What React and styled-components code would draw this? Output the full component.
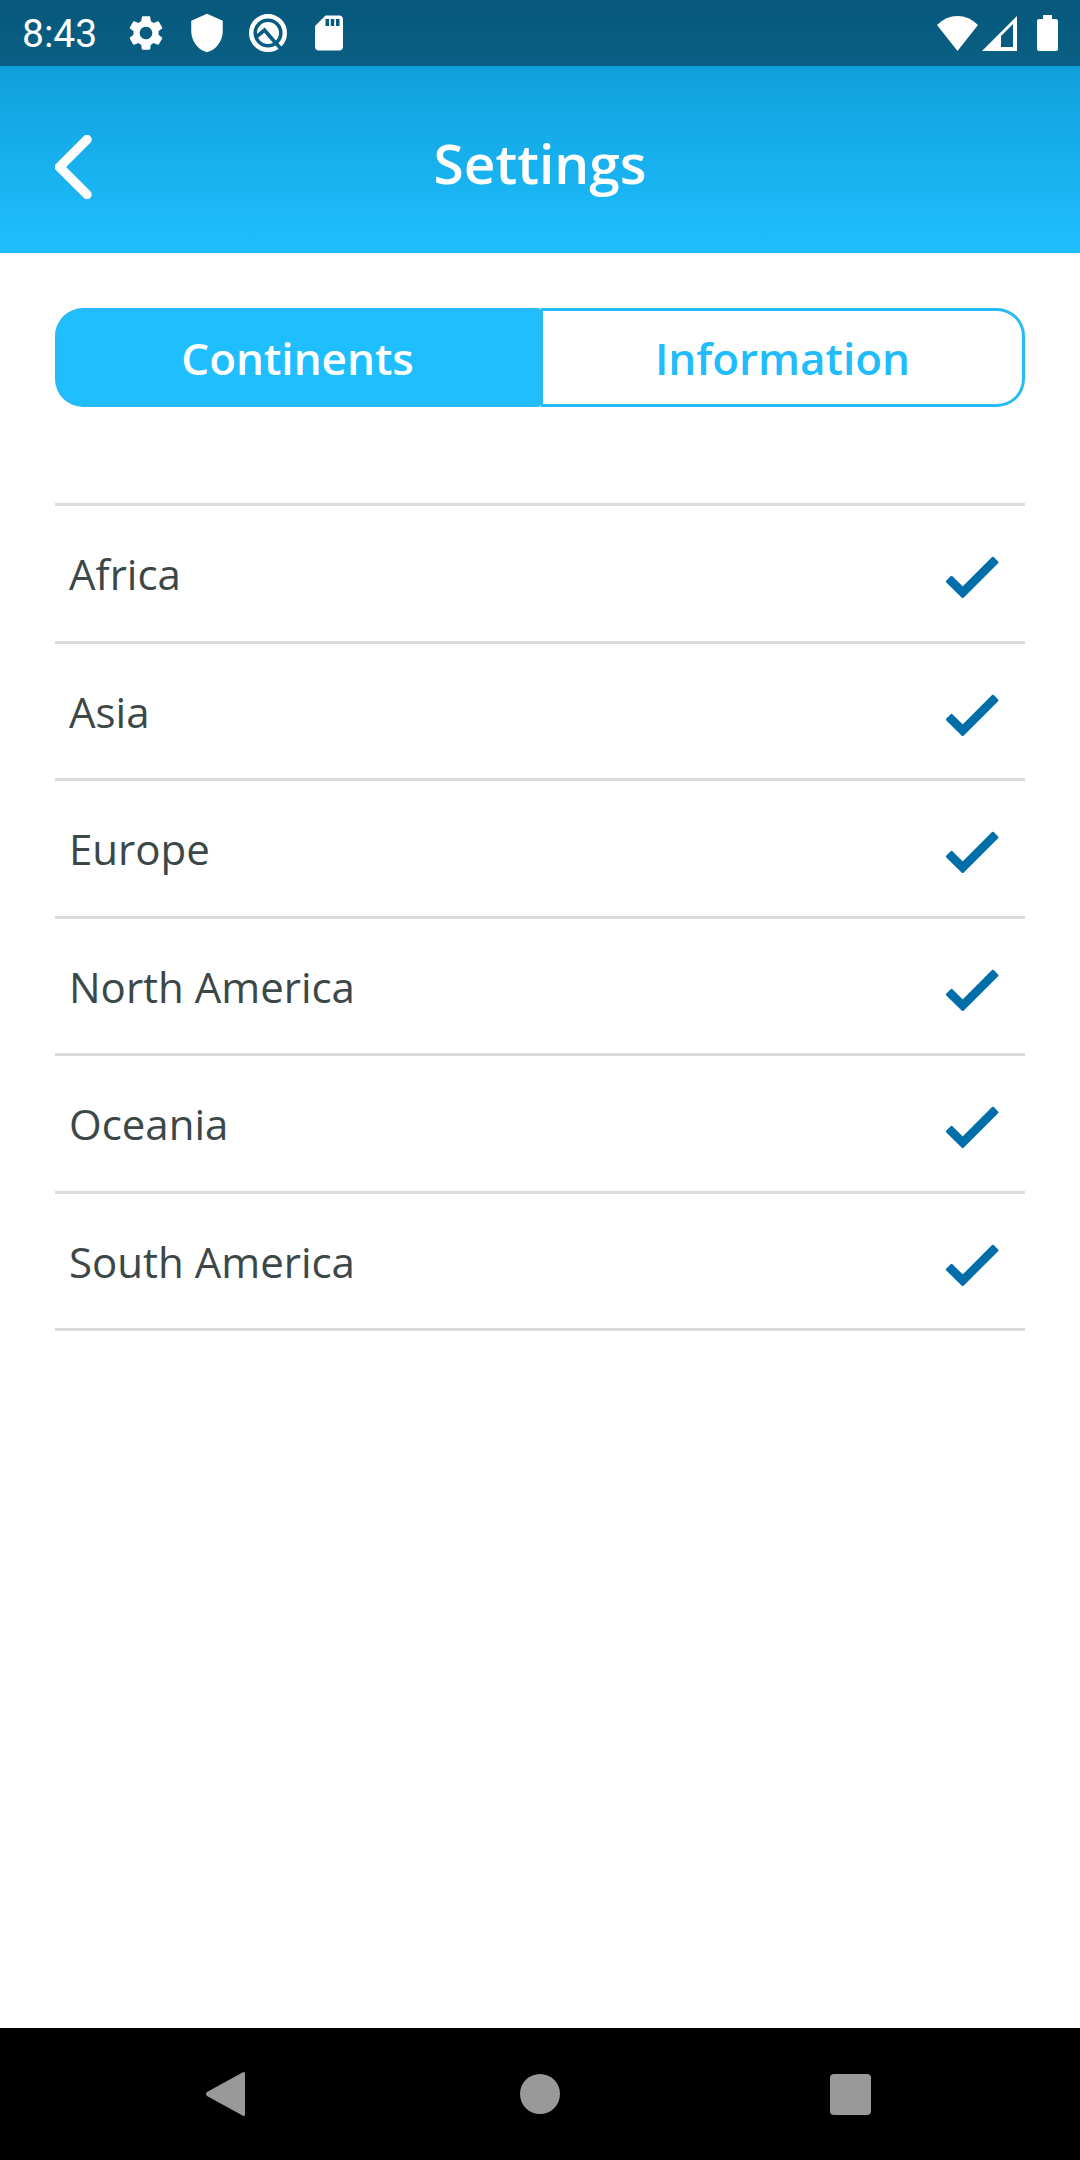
import React, { useState } from 'react';
import styled, { createGlobalStyle, css } from 'styled-components';
import { MdSettings, MdShield, MdSdCard } from 'react-icons/md';

const GlobalStyle = createGlobalStyle`
  *, *::before, *::after {
    box-sizing: border-box;
  }

  body {
    margin: 0;
    background: #fff;
    font-family: 'Open Sans', sans-serif;
  }

  button {
    font-family: inherit;
    cursor: pointer;
  }
`;

const S = {
  Screen: styled.div`
    display: flex;
    flex-direction: column;
    min-height: 100vh;
    background: #fff;
  `,
  Top: styled.div`
    background: linear-gradient(#0b94cf, #1fbfff);
  `,
  StatusBar: styled.div`
    display: flex;
    align-items: center;
    justify-content: space-between;
    height: 66px;
    padding: 0 22px;
    background: rgba(0, 0, 0, 0.4);
    color: #fff;
  `,
  StatusGroup: styled.div`
    display: flex;
    align-items: center;
    gap: ${(props) => props.$gap}px;

    svg {
      display: block;
    }
  `,
  Time: styled.span`
    margin-right: 9px;
    padding-top: 2px;
    font-family: Roboto, sans-serif;
    font-size: 39px;
    line-height: 46px;
  `,
  Header: styled.header`
    display: grid;
    grid-template-columns: 1fr auto 1fr;
    align-items: center;
    height: 187px;
    padding: 6px 55px 0;
    color: #fff;
  `,
  Back: styled.button`
    justify-self: start;
    padding: 8px 0 0;
    border: 0;
    background: none;
    color: inherit;

    svg {
      display: block;
    }
  `,
  Title: styled.h1`
    margin: 0;
    font-size: 55px;
    font-weight: 600;
    line-height: 75px;
  `,
  Main: styled.main`
    flex: 1;
    padding: 55px;
  `,
  Tabs: styled.div`
    display: grid;
    grid-template-columns: 1fr 1fr;
    margin-bottom: 96px;
  `,
  Tab: styled.button`
    height: 99px;
    padding: 0;
    border: 3px solid #27baf5;
    border-radius: 2px;
    background: #fff;
    color: #20bcfb;
    font-size: 44px;
    font-weight: 600;
    line-height: 60px;

    &:first-child {
      border-top-left-radius: 28px;
      border-bottom-left-radius: 28px;
    }

    &:last-child {
      border-top-right-radius: 28px;
      border-bottom-right-radius: 28px;
    }

    ${(props) => props.$active && css`
      background: #1fbfff;
      color: #fff;
    `}
  `,
  List: styled.ul`
    display: grid;
    grid-auto-rows: 1fr;
    min-height: 828px;
    margin: 0;
    padding: 0;
    border-top: 3px solid #dbdbdb;
    list-style: none;
  `,
  Row: styled.li`
    border-bottom: 3px solid #dbdbdb;
  `,
  Label: styled.label`
    display: flex;
    align-items: center;
    justify-content: space-between;
    height: 100%;
    padding: 2px 24px 0 14px;
    color: #3c4748;
    font-size: 42px;
    line-height: 56px;
    cursor: pointer;
  `,
  Check: styled.span`
    display: grid;

    input, svg {
      grid-area: 1 / 1;
    }

    input {
      width: 100%;
      height: 100%;
      margin: 0;
      appearance: none;
    }

    svg {
      visibility: hidden;
      pointer-events: none;
    }

    input:checked + svg {
      visibility: visible;
    }
  `,
  NavBar: styled.nav`
    display: flex;
    align-items: center;
    justify-content: center;
    height: 132px;
    background: #000;
  `,
  NavButton: styled.button`
    display: flex;
    align-items: center;
    justify-content: center;
    width: 310px;
    height: 132px;
    padding: 0;
    border: 0;
    background: none;
    color: #999;
  `,
};

const CONTINENTS = ['Africa', 'Asia', 'Europe', 'North America', 'Oceania', 'South America'];
const TABS = ['Continents', 'Information'];

function QuickIcon() {
  return (
    <svg width="42" height="38" viewBox="0 0 42 38" fill="none">
      <circle cx="21" cy="19" r="16.8" stroke="currentColor" strokeWidth="4.4" />
      <circle cx="21" cy="19" r="11" fill="currentColor" />
      <path d="M8 24L17.500 16L26 26L36 37" stroke="#085b83" strokeWidth="3.6" />
    </svg>
  );
}

function StatusBar() {
  return (
    <S.StatusBar>
      <S.StatusGroup $gap={19}>
        <S.Time>8:43</S.Time>
        <MdSettings size={42} />
        <MdShield size={42} />
        <QuickIcon />
        <MdSdCard size={42} />
      </S.StatusGroup>
      <S.StatusGroup $gap={4}>
        <svg width="41" height="35" viewBox="0 0 41 35" fill="currentColor">
          <path d="M0 9Q9 0 20.500 0T41 9L20.500 35Z" />
        </svg>
        <svg width="51" height="35" viewBox="0 0 51 35" fill="currentColor">
          <path fillRule="evenodd" d="M0 35L35 0V35ZM19 20V31H31V8Z" />
        </svg>
        <svg width="21" height="36" viewBox="0 0 21 36" fill="currentColor">
          <path d="M6 0H15V4H19Q21 4 21 6V34Q21 36 19 36H2Q0 36 0 34V6Q0 4 2 4H6Z" />
        </svg>
      </S.StatusGroup>
    </S.StatusBar>
  );
}

function ContinentRow({ name, checked, onChange }) {
  return (
    <S.Row>
      <S.Label>
        {name}
        <S.Check>
          <input type="checkbox" checked={checked} onChange={onChange} />
          <svg width="56" height="50" viewBox="0 0 56 50" fill="#006ea8" stroke="#006ea8">
            <path d="M2.200 32.500L6.600 28.100L17.700 39.200L47.900 9L52.200 13.300L17.700 47.800Z" strokeWidth="2.5" strokeLinejoin="round" />
          </svg>
        </S.Check>
      </S.Label>
    </S.Row>
  );
}

function App() {
  const [tab, setTab] = useState('Continents');
  const [selected, setSelected] = useState(CONTINENTS);

  const toggle = (name) => {
    setSelected(selected.includes(name)
      ? selected.filter((item) => item !== name)
      : [...selected, name]);
  };

  return (
    <S.Screen>
      <GlobalStyle />
      <S.Top>
        <StatusBar />
        <S.Header>
          <S.Back aria-label="Back">
            <svg width="38" height="64" viewBox="0 0 38 64" fill="none">
              <path d="M32 4.500L4.500 32L32 59.500" stroke="currentColor" strokeWidth="9.5" strokeLinecap="round" strokeLinejoin="round" />
            </svg>
          </S.Back>
          <S.Title>Settings</S.Title>
        </S.Header>
      </S.Top>
      <S.Main>
        <S.Tabs>
          {TABS.map((name) => (
            <S.Tab key={name} $active={tab === name} onClick={() => setTab(name)}>{name}</S.Tab>
          ))}
        </S.Tabs>
        {tab === 'Continents' && (
          <S.List>
            {CONTINENTS.map((name) => (
              <ContinentRow
                key={name}
                name={name}
                checked={selected.includes(name)}
                onChange={() => toggle(name)}
              />
            ))}
          </S.List>
        )}
      </S.Main>
      <S.NavBar>
        <S.NavButton aria-label="Back">
          <svg width="48" height="46" viewBox="0 0 48 46" fill="currentColor">
            <path d="M36.500 1.500Q39 0 39 3V43Q39 46 36.500 44.500L1 25Q-1 23 1 21Z" />
          </svg>
        </S.NavButton>
        <S.NavButton aria-label="Home">
          <svg width="40" height="40" viewBox="0 0 40 40" fill="currentColor">
            <circle cx="20" cy="20" r="20" />
          </svg>
        </S.NavButton>
        <S.NavButton aria-label="Recent apps">
          <svg width="41" height="41" viewBox="0 0 41 41" fill="currentColor">
            <rect width="41" height="41" rx="4" />
          </svg>
        </S.NavButton>
      </S.NavBar>
    </S.Screen>
  );
}

export default App;
